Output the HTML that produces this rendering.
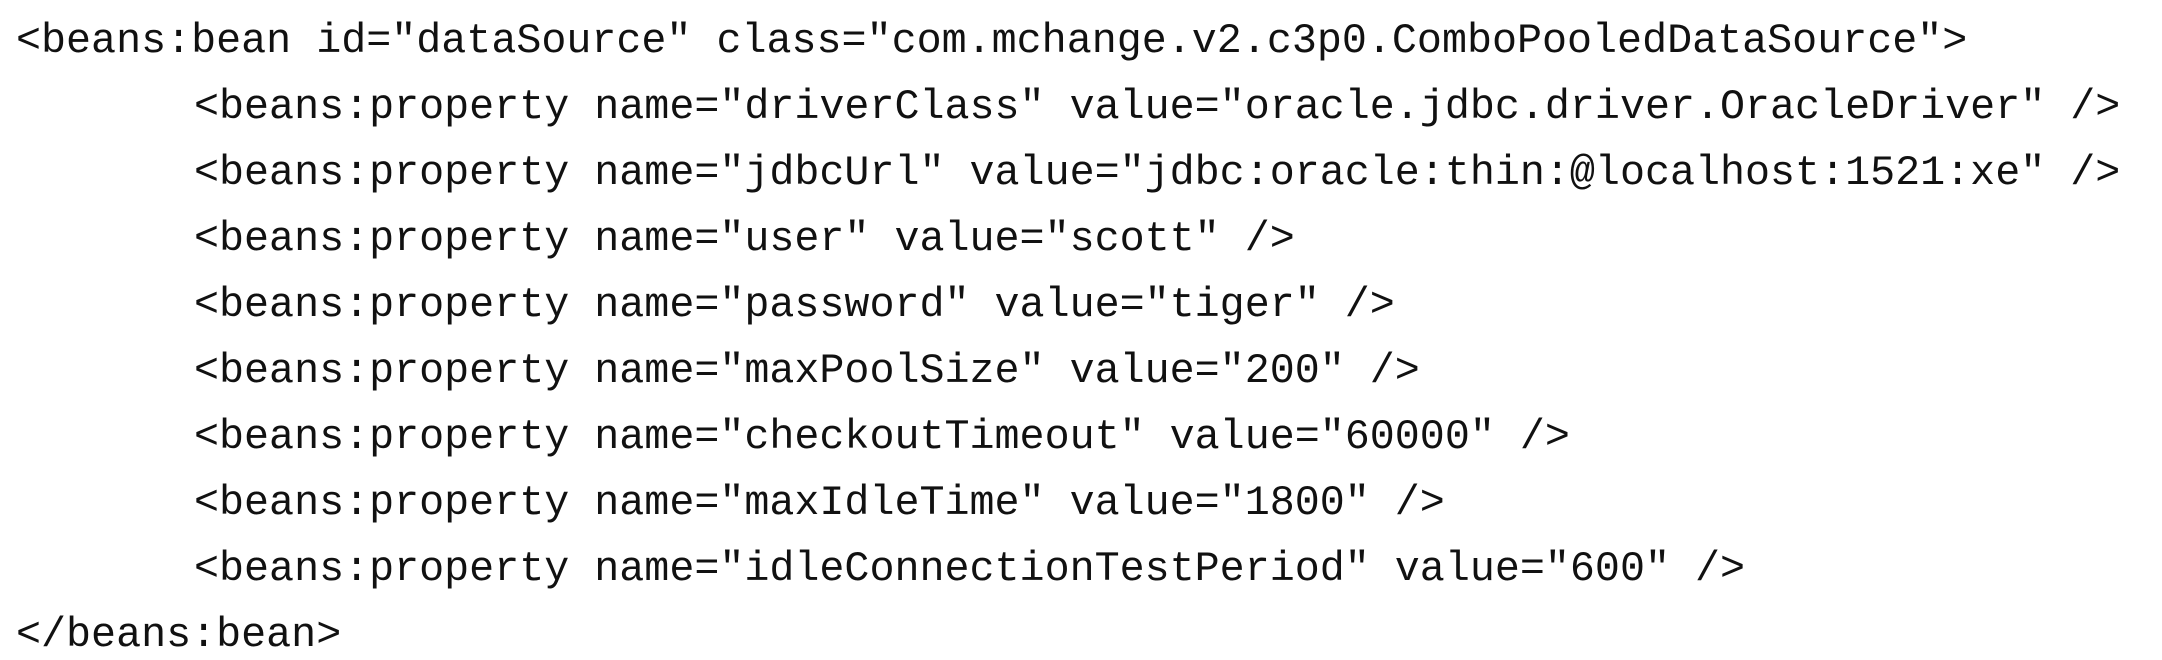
<!DOCTYPE html>
<html><head><meta charset="utf-8"><style>
html,body{margin:0;padding:0;background:#fff;width:2162px;height:660px;overflow:hidden}
.c{padding:8px 0 0 16px;font-family:"Liberation Mono",monospace;font-size:41.7px;line-height:66px;color:#111;white-space:pre;}
.c div{height:66px}
.i{padding-left:178px}
</style></head><body><div class="c"><div>&lt;beans:bean id="dataSource" class="com.mchange.v2.c3p0.ComboPooledDataSource"&gt;</div><div class="i">&lt;beans:property name="driverClass" value="oracle.jdbc.driver.OracleDriver" /&gt;</div><div class="i">&lt;beans:property name="jdbcUrl" value="jdbc:oracle:thin:@localhost:1521:xe" /&gt;</div><div class="i">&lt;beans:property name="user" value="scott" /&gt;</div><div class="i">&lt;beans:property name="password" value="tiger" /&gt;</div><div class="i">&lt;beans:property name="maxPoolSize" value="200" /&gt;</div><div class="i">&lt;beans:property name="checkoutTimeout" value="60000" /&gt;</div><div class="i">&lt;beans:property name="maxIdleTime" value="1800" /&gt;</div><div class="i">&lt;beans:property name="idleConnectionTestPeriod" value="600" /&gt;</div><div>&lt;/beans:bean&gt;</div></div></body></html>
